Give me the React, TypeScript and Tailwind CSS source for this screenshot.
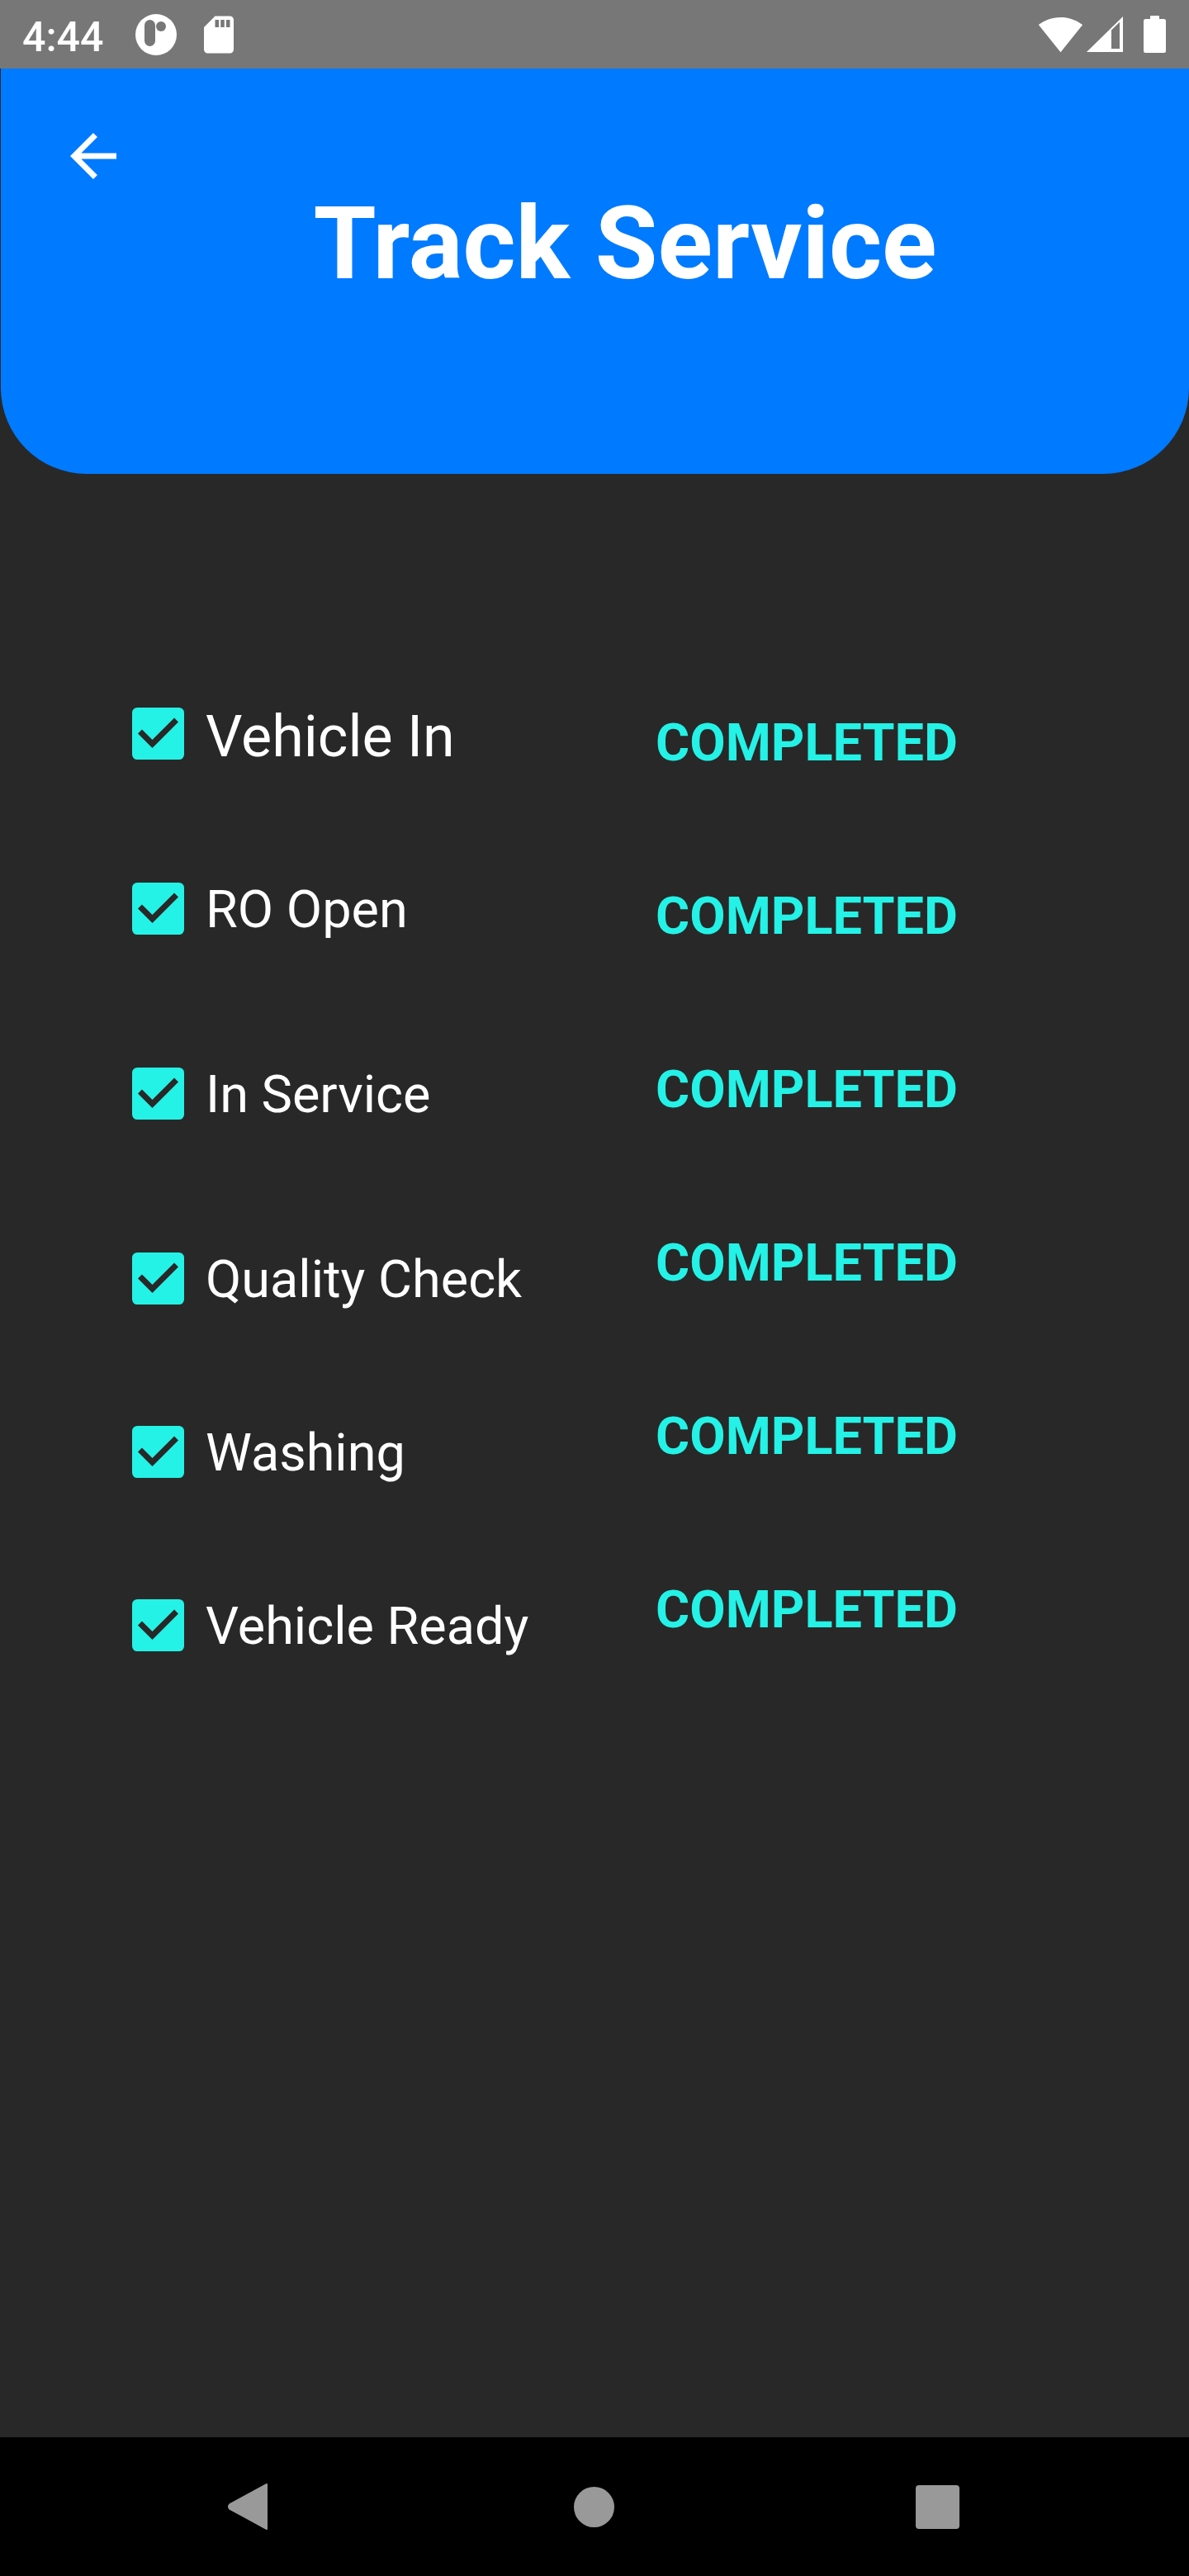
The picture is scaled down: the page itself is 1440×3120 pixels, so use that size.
import React from "react";

const CYAN = "#24f2e6";

function CheckBox({ className = "" }: { className?: string }) {
  return (
    <svg width="63" height="63" viewBox="3 3 18 18" className={"shrink-0 " + className}>
      <rect x="3" y="3" width="18" height="18" rx="1.8" fill={CYAN} />
      <path d="M10 17l-5-5 1.41-1.41L10 14.17l7.59-7.59L19 8l-9 9z" fill="#282828" />
    </svg>
  );
}

const rows = [
  { label: "Vehicle In", mt: "mt-[277px]", cb: "mt-[6px]", text: "text-[70px] leading-[82px]" },
  { label: "RO Open", mt: "mt-[132px]", cb: "mt-[3.5px]", text: "text-[63px] leading-[74px]" },
  { label: "In Service", mt: "mt-[150px]", cb: "mt-[3.5px]", text: "text-[63px] leading-[74px]" },
  { label: "Quality Check", mt: "mt-[150px]", cb: "mt-[3.5px]", text: "text-[63px] leading-[74px]" },
  { label: "Washing", mt: "mt-[136px]", cb: "mt-[3.5px]", text: "text-[63px] leading-[74px]" },
  { label: "Vehicle Ready", mt: "mt-[136px]", cb: "mt-[3.5px]", text: "text-[63px] leading-[74px]" },
];

export default function App() {
  return (
    <div className="w-[1440px] h-[3120px] bg-[#282828] flex flex-col font-['Roboto','Noto_Sans',sans-serif] overflow-hidden">
      {/* Status bar */}
      <div className="h-[83px] shrink-0 bg-[#777777] flex items-center justify-between">
        <div className="flex items-center">
          <span className="ml-[27px] w-[100px] mt-[7px] text-[50px] leading-[50px] font-medium text-white">4:44</span>
          <svg width="50" height="50" viewBox="0 0 50 50" className="ml-[37px]">
            <circle cx="25" cy="25" r="25" fill="#ffffff" />
            <rect x="11" y="7" width="13" height="32" rx="6.5" fill="#777777" />
            <circle cx="31" cy="15" r="6" fill="#777777" />
          </svg>
          <svg width="54" height="54" viewBox="0 0 24 24" className="ml-[24px]" fill="#ffffff">
            <path d="M18 2h-8L4.02 8 4 20c0 1.1.9 2 2 2h12c1.1 0 2-.9 2-2V4c0-1.1-.9-2-2-2zm-6 6h-2V4h2v4zm3 0h-2V4h2v4zm3 0h-2V4h2v4z" />
          </svg>
        </div>
        <div className="flex items-center pr-[28px]">
          <svg width="55" height="55" viewBox="0 0 24 24" fill="#ffffff">
            <path d="M12.01 21.49L23.64 7c-.45-.34-4.93-4-11.64-4C5.28 3 .81 6.66.36 7l11.63 14.49.01.01.01-.01z" />
          </svg>
          <svg width="44" height="43" viewBox="0 0 44 43" className="ml-[4px]">
            <path d="M44 0V43H0Z" fill="#ffffff" />
            <path d="M30 16.5L40 6.7V39H30Z" fill="#777777" />
          </svg>
          <svg width="27" height="45" viewBox="0 0 27 45" className="ml-[25px]" fill="#ffffff">
            <rect x="8" y="0" width="11" height="6" rx="1" />
            <rect x="0" y="4" width="27" height="41" rx="2.5" />
          </svg>
        </div>
      </div>

      {/* Header */}
      <div className="h-[491px] shrink-0 ml-[1px] bg-[#007aff] rounded-b-[104px] flex flex-col pl-[70px] pt-[64px]">
        <svg width="84" height="84" viewBox="0 0 24 24" fill="#ffffff" className="shrink-0">
          <path d="M20 11H7.83l5.59-5.59L12 4l-8 8 8 8 1.41-1.41L7.83 13H20v-2z" />
        </svg>
        <h1 className="mt-[14px] pl-[3px] text-center text-white font-bold text-[123px] leading-[100px]">Track Service</h1>
      </div>

      {/* Content */}
      <div className="flex-1 flex">
        <div className="w-[634px] ml-[160px] flex flex-col">
          {rows.map((r) => (
            <div key={r.label} className={"flex items-start " + r.mt}>
              <CheckBox className={r.cb} />
              <span className={"ml-[26px] text-white whitespace-nowrap " + r.text}>{r.label}</span>
            </div>
          ))}
        </div>
        <div className="flex flex-col pt-[289px] gap-[136px]">
          {rows.map((r) => (
            <span key={r.label} className="text-[63px] leading-[74px] font-bold text-[#24f2e6]">
              COMPLETED
            </span>
          ))}
        </div>
      </div>

      {/* Navigation bar */}
      <div className="h-[168px] shrink-0 bg-black flex items-center">
        <svg width="49" height="56" viewBox="0 0 49 56" className="ml-[275px]">
          <path d="M48 1V55L3 30.5Q1 28 3 25.5Z" fill="#999999" stroke="#999999" strokeWidth="2" strokeLinejoin="round" />
        </svg>
        <div className="ml-[371px] w-[49px] h-[49px] rounded-full bg-[#999999]" />
        <div className="ml-[365px] w-[53px] h-[53px] rounded-[4px] bg-[#999999]" />
      </div>
    </div>
  );
}
